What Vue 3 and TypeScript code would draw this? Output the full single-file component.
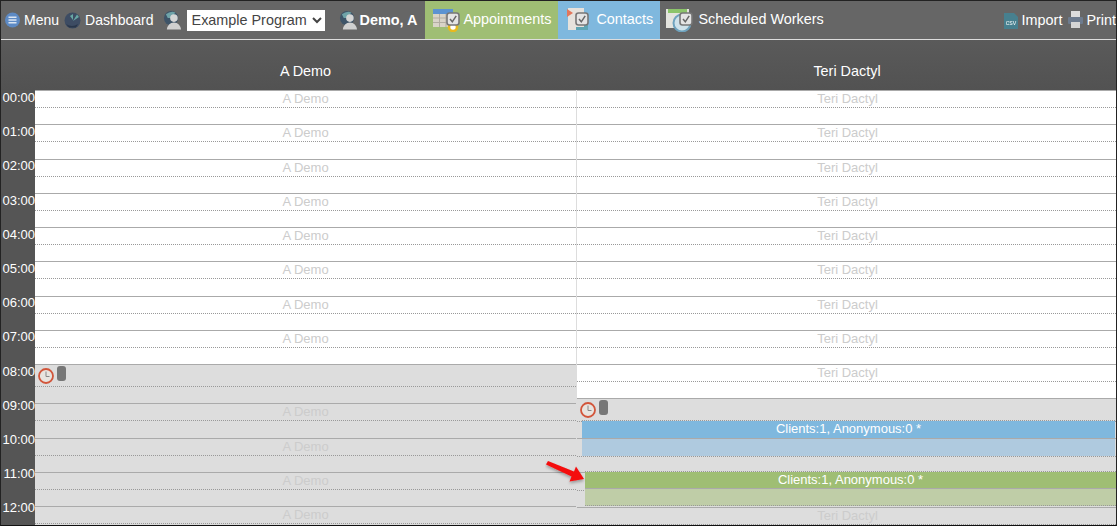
<script setup lang="ts">
interface Hour {
  top: number
  half: number
  next: number
  off?: boolean
  tools?: boolean
  label?: boolean
}

const base = [90, 124, 159, 193, 227, 261, 296, 330, 364]

function buildColumn(tops: number[], halves: number[], offFrom: number, hidden: number[]): Hour[] {
  return tops.map((top, i) => ({
    top,
    half: halves[i],
    next: tops[i + 1] ?? 541,
    off: i >= offFrom,
    tools: i === offFrom,
    label: i !== offFrom && !hidden.includes(i),
  }))
}

const columns = [
  {
    name: 'A Demo',
    hours: buildColumn(
      [...base, 403, 438, 472, 506],
      [107, 141, 176, 210, 244, 278, 313, 347, 386, 420, 455, 489, 523],
      8,
      [],
    ),
  },
  {
    name: 'Teri Dactyl',
    hours: buildColumn(
      [...base, 398, 438, 472, 507],
      [107, 141, 176, 210, 244, 278, 313, 347, 381, 421, 456, 490, 524],
      9,
      [10, 11],
    ),
  },
]

const times = Array.from({ length: 13 }, (_, i) => `${String(i).padStart(2, '0')}:00`)
</script>

<template>
  <div class="screen">
    <svg class="defs" width="0" height="0">
      <defs>
        <symbol id="person" viewBox="0 0 20 20">
          <circle cx="8.5" cy="8" r="7.5" fill="#3e5468" />
          <path d="M3 4 Q8 0 13 2 L9 8 L5 8 Z" fill="#6fa3a8" />
          <circle cx="11.5" cy="8" r="4" fill="#d5d5d5" />
          <path d="M4 20 Q5 13 11.5 12.5 Q18 13 19 20 Z" fill="#d0d0d0" />
        </symbol>
        <symbol id="check" viewBox="0 0 14 14">
          <rect x="1" y="1" width="12" height="12" rx="2.5" fill="#e4e4e4" stroke="#777" stroke-width="1.6" />
          <path d="M4 7 L6.3 9.8 L10.2 3.8" fill="none" stroke="#666" stroke-width="1.5" />
        </symbol>
        <symbol id="clock" viewBox="0 0 16 16">
          <circle cx="8" cy="8" r="7" fill="#e8e4df" stroke="#d2553a" stroke-width="1.8" />
          <path d="M8 3.5 V8.5 H11.5" fill="none" stroke="#888" stroke-width="1" />
        </symbol>
      </defs>
    </svg>

    <nav class="topbar">
      <a class="item menu">
        <svg class="ic" width="15" height="16" viewBox="0 0 15 16">
          <circle cx="7.5" cy="8" r="7.5" fill="#5d8ac4" />
          <path d="M3.5 5.2 H11.5 M3.5 8 H11.5 M3.5 10.8 H11.5" stroke="#dbe6f3" stroke-width="1.6" />
        </svg>
        Menu
      </a>
      <a class="item dash">
        <svg class="ic" width="17" height="17" viewBox="0 0 17 17">
          <circle cx="8.5" cy="8.5" r="8" fill="#3d4c63" />
          <path d="M9 9 L13 2.5 L15 5 Z M6 4 L9 2 L9 8 Z" fill="#68a8a4" />
          <path d="M2 12 Q8 16 14 12 L12 15.5 L5 15.5 Z" fill="#29364a" />
        </svg>
        Dashboard
      </a>
      <svg class="person program-ic" width="19" height="20"><use href="#person" /></svg>
      <select class="program">
        <option>Example Program</option>
      </select>
      <svg class="person user-ic" width="19" height="20"><use href="#person" /></svg>
      <b class="user">Demo, A</b>

      <a class="tab green">
        <span class="tab-ic">
          <svg width="27" height="26" viewBox="0 0 27 26">
            <rect x="0" y="4" width="20" height="17" fill="#d9d4c8" />
            <rect x="0" y="3" width="20" height="5" fill="#5b93d2" />
            <path d="M0 12 H20 M0 16.5 H20 M6.5 8 V21 M13 8 V21" stroke="#b2ada2" stroke-width="1" />
            <circle cx="20" cy="21" r="4" fill="#fff" stroke="#e8b91e" stroke-width="2.6" />
          </svg>
          <svg class="badge" width="14" height="14"><use href="#check" /></svg>
        </span>
        Appointments
      </a>
      <a class="tab blue">
        <span class="tab-ic">
          <svg width="22" height="26" viewBox="0 0 22 26">
            <rect x="1" y="2" width="16" height="22" fill="#e6e2dc" />
            <path d="M0 3 L6 7 L0 11 Z" fill="#e2765c" />
            <path d="M17 11 H21 V24 H9 V21 H17 Z" fill="#5da5b4" />
          </svg>
          <svg class="badge" width="14" height="14"><use href="#check" /></svg>
        </span>
        Contacts
      </a>
      <a class="tab plain">
        <span class="tab-ic">
          <svg width="27" height="26" viewBox="0 0 27 26">
            <rect x="0" y="3" width="23" height="19" fill="#e4e4de" />
            <rect x="2" y="3" width="19" height="4" fill="#8cc46a" />
            <circle cx="16" cy="17" r="8.5" fill="#cfe2ea" stroke="#6fa3be" stroke-width="2" />
          </svg>
          <svg class="badge" width="14" height="14"><use href="#check" /></svg>
        </span>
        Scheduled Workers
      </a>

      <a class="item import">
        <svg class="ic" width="14" height="17" viewBox="0 0 14 17">
          <path d="M0 1 H10 L14 5 V17 H0 Z" fill="#47808f" />
          <text x="7" y="12.5" text-anchor="middle" font-size="7" fill="#e6f0f2" font-family="Liberation Sans, sans-serif">csv</text>
        </svg>
        Import
      </a>
      <a class="item print">
        <svg class="ic" width="15" height="18" viewBox="0 0 15 18">
          <rect x="3" y="0" width="9" height="6" fill="#ddd" />
          <rect x="0" y="6" width="15" height="7" rx="1" fill="#6d7b8e" />
          <rect x="3" y="11" width="9" height="6" fill="#d5d5d5" />
        </svg>
        Print
      </a>
    </nav>

    <div class="table-head">
      <div class="gutter-head"></div>
      <div v-for="col in columns" :key="col.name" class="col-head">{{ col.name }}</div>
    </div>

    <div class="table-body">
      <div class="gutter">
        <div v-for="t in times" :key="t" class="time">{{ t }}</div>
      </div>

      <div v-for="(col, c) in columns" :key="col.name" class="col" :class="{ right: c === 1 }">
        <div
          v-for="h in col.hours"
          :key="h.top"
          class="hour"
          :class="{ off: h.off }"
          :style="{ height: `${h.next - h.top}px` }"
        >
          <div class="half" :style="{ height: `${h.half - h.top}px` }">
            <div v-if="h.tools" class="tools">
              <svg class="clock" width="16" height="16"><use href="#clock" /></svg>
              <span class="pill"></span>
            </div>
            <span v-else-if="h.label" class="slot-label">{{ col.name }}</span>
          </div>
          <div class="half dotted"></div>
        </div>

        <template v-if="c === 1">
          <div class="event ev-blue">
            <div class="ev-top">Clients:1, Anonymous:0 *</div>
            <div class="ev-bottom"></div>
          </div>
          <div class="event ev-green">
            <div class="ev-top">Clients:1, Anonymous:0 *</div>
            <div class="ev-bottom"></div>
          </div>
        </template>
      </div>
    </div>

    <svg class="arrow" width="46" height="28" viewBox="0 0 46 28">
      <defs>
        <filter id="arrow-shadow" x="-20%" y="-20%" width="150%" height="170%">
          <feDropShadow dx="0" dy="2" stdDeviation="1.5" flood-color="#000" flood-opacity="0.3" />
        </filter>
      </defs>
      <path
        d="M1 3.5 L3 0 L29 10.5 L31 5.5 L39 18 L24.5 20.5 L26.5 15.5 Z"
        fill="#f40d0d"
        filter="url(#arrow-shadow)"
      />
    </svg>
  </div>
</template>

<style>
html,
body {
  margin: 0;
  overflow: hidden;
}
</style>

<style scoped>
.screen {
  position: relative;
  box-sizing: border-box;
  width: 1117px;
  height: 526px;
  overflow: hidden;
  border: 1px solid #222;
  border-bottom-color: #111;
  background: #555;
  font-family: "Liberation Sans", Arial, sans-serif;
  font-size: 14px;
  color: #fff;
}

.defs {
  position: absolute;
}

.topbar {
  display: flex;
  align-items: center;
  height: 38px;
  background: #666;
  border-bottom: 1px solid #ddd;
  white-space: nowrap;
}

.item {
  display: flex;
  align-items: center;
  gap: 4px;
}

.ic,
.person,
.tab-ic svg {
  flex: none;
  filter: blur(0.35px);
}

.menu {
  margin-left: 4px;
}

.dash {
  margin-left: 5px;
}

.program-ic {
  margin-left: 9px;
}

.program {
  box-sizing: border-box;
  width: 138px;
  height: 21px;
  margin-left: 5px;
  padding: 0 0 0 1px;
  border: 0;
  background: #fff;
  color: #444;
  font: 14.4px "Liberation Sans", Arial, sans-serif;
}

.user-ic {
  margin-left: 14px;
}

.user {
  margin-left: 2px;
  font-size: 14.4px;
}

.tab {
  display: flex;
  align-items: center;
  align-self: stretch;
  padding-bottom: 2px;
  box-sizing: border-box;
  gap: 3px;
  font-size: 14.4px;
}

.tab.green {
  margin-left: 8px;
  width: 133px;
  padding-left: 8px;
  background: #9fbe74;
}

.tab.blue {
  width: 102px;
  padding-left: 9px;
  gap: 7px;
  background: #7fb8de;
}

.tab.plain {
  padding-left: 6px;
  gap: 5px;
}

.tab-ic {
  position: relative;
  display: flex;
}

.badge {
  position: absolute;
  right: 0;
  top: 6px;
}

.import {
  margin-left: auto;
  font-size: 14.4px;
}

.print {
  margin-left: 6px;
  gap: 3px;
  font-size: 14.4px;
}

.table-head {
  display: grid;
  grid-template-columns: 34px 541px 1fr;
  height: 50px;
  background: linear-gradient(#5a5a5a, #525252);
}

.col-head {
  padding-top: 23px;
  text-align: center;
  line-height: 16px;
  font-size: 14.4px;
}

.col-head:last-child {
  padding-left: 2px;
}

.table-body {
  display: grid;
  grid-template-columns: 34px 541px 1fr;
}

.gutter {
  background: #555;
}

.time {
  box-sizing: border-box;
  height: 34.2px;
  line-height: 15px;
  text-align: right;
  font-size: 13px;
}

.col {
  position: relative;
  background: #fff;
}

.col.right {
  border-left: 1px solid #ddd;
}

.col.right .slot-label {
  margin-left: 2px;
}

.hour {
  box-sizing: border-box;
  display: flex;
  flex-direction: column;
}

.hour.off {
  background: #ddd;
}

.half {
  box-sizing: border-box;
  flex: none;
  border-top: 1px solid #aaa;
  text-align: center;
  font-size: 13px;
  line-height: 15px;
  color: #ccc;
}

.half.dotted {
  flex: 1;
  border-top: 1px dotted #999;
}

.tools {
  display: flex;
  align-items: flex-start;
  gap: 3px;
  padding: 1px 0 0 3px;
}

.clock {
  margin-top: 2px;
}

.pill {
  width: 9px;
  height: 15px;
  border-radius: 3px;
  background: #777;
}

.event {
  position: absolute;
  text-align: center;
  font-size: 13px;
  line-height: 16px;
}

.ev-top,
.ev-bottom {
  box-sizing: border-box;
  height: 17px;
}

.ev-blue {
  top: 330px;
  left: 5px;
  right: 1px;
  border-top: 1px dotted #999;
}

.ev-blue .ev-top {
  background: #7fb8de;
}

.ev-blue .ev-bottom {
  height: 18px;
  border-top: 1px solid #aaa;
  background: #afcadf;
}

.ev-green {
  top: 381px;
  left: 8px;
  right: 0;
  border-top: 1px dotted #999;
}

.ev-green .ev-top {
  height: 16px;
  background: #9fbe74;
}

.ev-green .ev-bottom {
  height: 18px;
  border-top: 1px solid #aaa;
  border-bottom: 1px dotted #999;
  background: #bfcda7;
}

.arrow {
  position: absolute;
  left: 544px;
  top: 460px;
}
</style>
